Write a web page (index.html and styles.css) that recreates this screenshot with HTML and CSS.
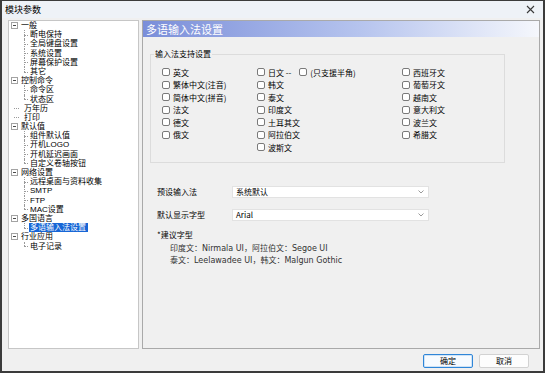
FILE: index.html
```html
<!DOCTYPE html>
<html lang="zh-CN">

<head>
    <meta charset="UTF-8">
    <meta name="viewport" content="width=device-width, initial-scale=1.0">
    <title>模块参数</title>
    <link rel="stylesheet" href="styles.css">
</head>

<body>

    <div class="window">

        <!-- Title bar -->
        <div class="titlebar">
            <span class="title">模块参数</span>
            <svg class="close" width="9" height="9" viewBox="0 0 9 9">
                <path d="M1 1L8 8M8 1L1 8" stroke="#3a3a3a" stroke-width="1.1" fill="none" />
            </svg>
        </div>

        <div class="main">

            <!-- Left tree -->
            <div class="tree">
                <div class="node">
                    <div class="row root"><span class="exp"></span><span class="txt">一般</span></div>
                    <div class="kids">
                        <div class="row leaf"><span class="txt">断电保持</span></div>
                        <div class="row leaf"><span class="txt">全局键盘设置</span></div>
                        <div class="row leaf"><span class="txt">系统设置</span></div>
                        <div class="row leaf"><span class="txt">屏幕保护设置</span></div>
                        <div class="row leaf"><span class="txt">其它</span></div>
                    </div>
                </div>
                <div class="node">
                    <div class="row root"><span class="exp"></span><span class="txt">控制命令</span></div>
                    <div class="kids">
                        <div class="row leaf"><span class="txt">命令区</span></div>
                        <div class="row leaf"><span class="txt">状态区</span></div>
                    </div>
                </div>
                <div class="node">
                    <div class="row root"><span class="dash"></span><span class="txt">万年历</span></div>
                </div>
                <div class="node">
                    <div class="row root"><span class="dash"></span><span class="txt">打印</span></div>
                </div>
                <div class="node">
                    <div class="row root"><span class="exp"></span><span class="txt">默认值</span></div>
                    <div class="kids">
                        <div class="row leaf"><span class="txt">组件默认值</span></div>
                        <div class="row leaf"><span class="txt">开机LOGO</span></div>
                        <div class="row leaf"><span class="txt">开机延迟画面</span></div>
                        <div class="row leaf"><span class="txt">自定义卷轴按钮</span></div>
                    </div>
                </div>
                <div class="node">
                    <div class="row root"><span class="exp"></span><span class="txt">网络设置</span></div>
                    <div class="kids">
                        <div class="row leaf"><span class="txt">远程桌面与资料收集</span></div>
                        <div class="row leaf"><span class="txt">SMTP</span></div>
                        <div class="row leaf"><span class="txt">FTP</span></div>
                        <div class="row leaf"><span class="txt">MAC设置</span></div>
                    </div>
                </div>
                <div class="node">
                    <div class="row root"><span class="exp"></span><span class="txt">多国语言</span></div>
                    <div class="kids">
                        <div class="row leaf"><span class="txt selected">多语输入法设置</span></div>
                    </div>
                </div>
                <div class="node">
                    <div class="row root"><span class="exp"></span><span class="txt">行业应用</span></div>
                    <div class="kids">
                        <div class="row leaf"><span class="txt">电子记录</span></div>
                    </div>
                </div>
            </div>

            <!-- Right settings panel -->
            <div class="panel">
                <div class="head">多语输入法设置</div>

                <fieldset class="group">
                    <legend>输入法支持设置</legend>
                    <div class="checks">
                        <div class="col col-1">
                            <label class="cb"><span class="box"></span>英文</label>
                            <label class="cb"><span class="box"></span>繁体中文(注音)</label>
                            <label class="cb"><span class="box"></span>简体中文(拼音)</label>
                            <label class="cb"><span class="box"></span>法文</label>
                            <label class="cb"><span class="box"></span>德文</label>
                            <label class="cb"><span class="box"></span>俄文</label>
                        </div>
                        <div class="col col-2">
                            <div class="cb">
                                <span class="box"></span><span>日文 --</span>
                                <span class="box sub"></span><span>(只支援半角)</span>
                            </div>
                            <label class="cb"><span class="box"></span>韩文</label>
                            <label class="cb"><span class="box"></span>泰文</label>
                            <label class="cb"><span class="box"></span>印度文</label>
                            <label class="cb"><span class="box"></span>土耳其文</label>
                            <label class="cb"><span class="box"></span>阿拉伯文</label>
                            <label class="cb"><span class="box"></span>波斯文</label>
                        </div>
                        <div class="col col-3">
                            <label class="cb"><span class="box"></span>西班牙文</label>
                            <label class="cb"><span class="box"></span>葡萄牙文</label>
                            <label class="cb"><span class="box"></span>越南文</label>
                            <label class="cb"><span class="box"></span>意大利文</label>
                            <label class="cb"><span class="box"></span>波兰文</label>
                            <label class="cb"><span class="box"></span>希腊文</label>
                        </div>
                    </div>
                </fieldset>

                <div class="form">
                    <div class="frow">
                        <span class="flabel">预设输入法</span>
                        <div class="select">
                            <span>系统默认</span>
                            <svg width="6" height="4" viewBox="0 0 6 4"><path d="M0.5 0.5L3 3L5.5 0.5" stroke="#9a9a9a" fill="none" /></svg>
                        </div>
                    </div>
                    <div class="frow">
                        <span class="flabel">默认显示字型</span>
                        <div class="select select-font">
                            <span>Arial</span>
                            <svg width="6" height="4" viewBox="0 0 6 4"><path d="M0.5 0.5L3 3L5.5 0.5" stroke="#9a9a9a" fill="none" /></svg>
                        </div>
                    </div>

                    <div class="hint-title">*建议字型</div>
                    <div class="hints">
                        <div>印度文：Nirmala UI，阿拉伯文：Segoe UI</div>
                        <div>泰文：Leelawadee UI，韩文：Malgun Gothic</div>
                    </div>
                </div>
            </div>

        </div>

        <!-- Dialog buttons -->
        <div class="footer">
            <button class="btn primary">确定</button>
            <button class="btn">取消</button>
        </div>

    </div>

</body>

</html>
```

FILE: styles.css
```css
body {
    margin: 0;
    font-family: "Noto Sans CJK SC", sans-serif;
    font-size: 8px;
    color: #000;
    background: #fff;
}

.window {
    width: 545px;
    height: 373px;
    box-sizing: border-box;
    border: 2px solid #3b3b3b;
    border-top-width: 1px;
    background: #f0f0f0;
    display: flex;
    flex-direction: column;
}

/* Title bar */
.titlebar {
    height: 17px;
    flex: none;
    background: #eef2f7;
    display: flex;
    align-items: center;
    justify-content: space-between;
    padding: 0 8px 0 3px;
}

.title {
    font-size: 9px;
}

.main {
    height: 329px;
    flex: none;
    margin-top: 2px;
    padding: 0 3px 0 6px;
    display: flex;
    gap: 3px;
}

/* Tree */
.tree {
    width: 131px;
    box-sizing: border-box;
    border: 1px solid #c6c6c6;
    background: #fff;
    font-family: "Liberation Sans", "Noto Sans CJK SC", sans-serif;
}

.row {
    position: relative;
    display: flex;
    align-items: center;
    height: 9.2px;
    white-space: nowrap;
}

.root {
    padding-left: 2px;
}

.exp {
    width: 7px;
    height: 7px;
    box-sizing: border-box;
    border: 1px solid #a3a3a3;
    margin-right: 2px;
    background: linear-gradient(#4a4a4a, #4a4a4a) center / 3px 1px no-repeat;
}

.dash {
    width: 5px;
    margin: 0 4px 0 3px;
    border-top: 1px dotted #9a9a9a;
}

.leaf {
    padding-left: 20px;
}

.leaf::before {
    content: "";
    position: absolute;
    left: 15px;
    top: 50%;
    width: 4px;
    border-top: 1px dotted #9a9a9a;
}

.leaf::after {
    content: "";
    position: absolute;
    left: 15px;
    top: 0;
    bottom: 0;
    border-left: 1px dotted #9a9a9a;
}

.leaf:last-child::after {
    bottom: 50%;
}

.txt {
    line-height: 9.2px;
    padding: 0 1px;
}

.txt.selected {
    background: #1766d6;
    color: #fff;
    padding: 0 2px 0 1px;
}

/* Right panel */
.panel {
    flex: 1;
    border: 1px solid #a9a9a9;
    background: #f0f0f0;
}

.head {
    height: 16px;
    line-height: 16px;
    padding-left: 3px;
    font-size: 11px;
    color: #fff;
    background: linear-gradient(to right, #7a8ed9, #b6c4ee 55%, #f5f7fc);
}

.group {
    width: 355px;
    box-sizing: border-box;
    margin: 12px 0 0 7px;
    padding: 7px 0 8px 3px;
    border: 1px solid #dcdcdc;
}

.group legend {
    padding: 0 1px;
    line-height: 10px;
}

.checks {
    display: flex;
    margin-left: 8px;
}

.col {
    display: flex;
    flex-direction: column;
}

.col-1 {
    width: 95px;
}

.col-2 {
    width: 145px;
}

.cb {
    display: flex;
    align-items: center;
    gap: 3px;
    height: 12.5px;
    white-space: nowrap;
}

.box {
    width: 8px;
    height: 8px;
    box-sizing: border-box;
    border: 1px solid #7a7a7a;
    border-radius: 2px;
    background: #fff;
}

.box.sub {
    margin-left: 5px;
}

/* Selects and hints */
.form {
    margin: 23px 0 0 14px;
}

.frow {
    display: flex;
    align-items: center;
    height: 12px;
    margin-bottom: 11px;
}

.flabel {
    width: 75px;
}

.select {
    width: 197px;
    height: 12px;
    box-sizing: border-box;
    background: #fff;
    border: 1px solid #e2e2e2;
    display: flex;
    align-items: center;
    justify-content: space-between;
    padding: 0 4px 0 3px;
}

.hint-title {
    margin-top: -3px;
    line-height: 12px;
}

.hints {
    margin-top: 2px;
    padding-left: 13px;
    line-height: 12px;
    color: #333;
    font-family: "DejaVu Sans", "Noto Sans CJK SC", sans-serif;
}

/* Footer buttons */
.footer {
    flex: 1;
    display: flex;
    justify-content: flex-end;
    align-items: flex-start;
    gap: 6px;
    padding: 5px 14px 0 0;
}

.btn {
    width: 50px;
    height: 14px;
    box-sizing: border-box;
    padding: 0;
    border: 1px solid #d2d2d2;
    border-radius: 2px;
    background: #fdfdfd;
    font-family: "Noto Sans CJK SC", sans-serif;
    font-size: 8px;
    line-height: 12px;
    color: #000;
}

.btn.primary {
    border-color: #2f86d8;
    box-shadow: inset 0 0 0 1px #cfe3f6;
    background: #f7fbff;
}
```
